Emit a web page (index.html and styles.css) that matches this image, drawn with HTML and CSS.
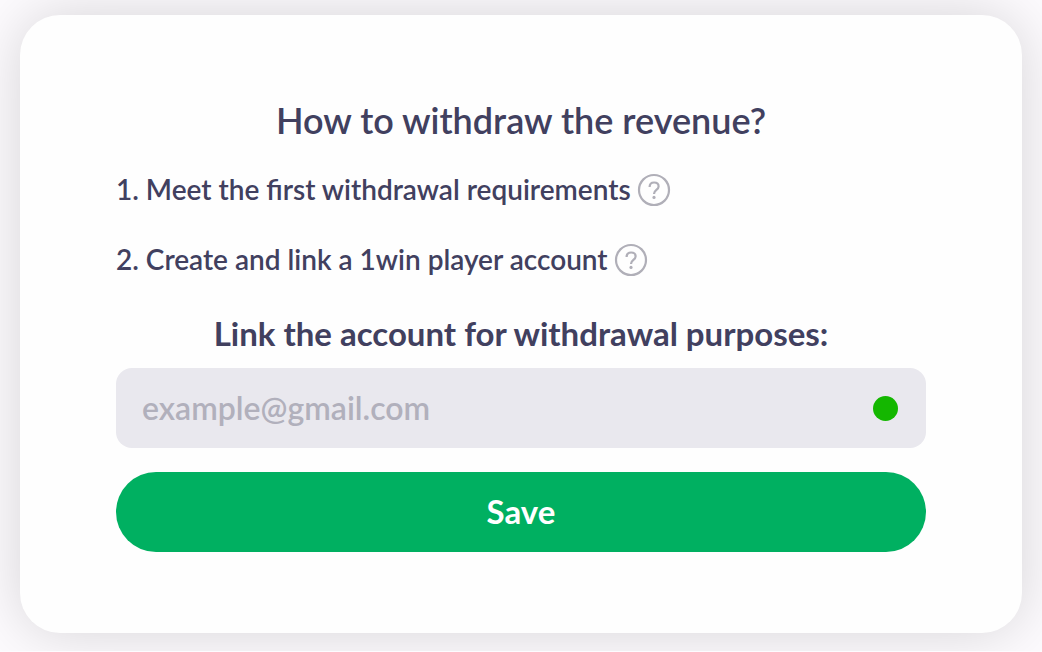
FILE: index.html
```html
<!DOCTYPE html>
<html lang="en">
<head>
<meta charset="utf-8">
<meta name="viewport" content="width=device-width, initial-scale=1">
<title>Withdraw revenue</title>
<link rel="stylesheet" href="styles.css">
</head>
<body>
<main class="card">
  <h1 class="title">How to withdraw the revenue?</h1>
  <ol class="steps">
    <li class="step"><span>1. Meet the first withdrawal requirements</span>
      <button class="help" type="button" aria-label="About withdrawal requirements"><svg class="help-icon" viewBox="0 0 34 34" aria-hidden="true"><circle cx="17" cy="17" r="15"/><path d="M12.6 14c0-2.8 1.8-4.5 4.5-4.5s4.5 1.6 4.5 3.9c0 3.4-4.5 3.6-4.5 7.2v.4"/><circle class="dot" cx="17" cy="24.4" r="1.6"/></svg></button>
    </li>
    <li class="step"><span>2. Create and link a 1win player account</span>
      <button class="help" type="button" aria-label="About the player account"><svg class="help-icon" viewBox="0 0 34 34" aria-hidden="true"><circle cx="17" cy="17" r="15"/><path d="M12.6 14c0-2.8 1.8-4.5 4.5-4.5s4.5 1.6 4.5 3.9c0 3.4-4.5 3.6-4.5 7.2v.4"/><circle class="dot" cx="17" cy="24.4" r="1.6"/></svg></button>
    </li>
  </ol>
  <form class="form">
    <label class="label" for="email">Link the account for withdrawal purposes:</label>
    <div class="field">
      <input class="input" id="email" type="email" placeholder="example@gmail.com">
      <span class="status"></span>
    </div>
    <button class="save" type="button">Save</button>
  </form>
</main>
</body>
</html>
```
FILE: styles.css
```css
* {
  box-sizing: border-box;
}

body {
  margin: 0;
  padding: 15px 20px 18px;
  background: #fdfbfe;
  color: #41405f;
  font-family: Lato, "Open Sans", sans-serif;
}

.card {
  padding: 80px 96px 81px;
  border-radius: 40px;
  background: #fefefe;
  box-shadow: 0 0 60px rgba(0, 0, 0, 0.16);
}

.title {
  margin: 0 0 28px;
  font-size: 36px;
  font-weight: 600;
  line-height: 50px;
  text-align: center;
}

.steps {
  display: flex;
  flex-direction: column;
  gap: 36px;
  margin: 0;
  padding: 0;
  list-style: none;
}

.step {
  display: flex;
  align-items: center;
  gap: 6px;
  font-size: 28px;
  font-weight: 600;
  line-height: 34px;
}

.step span {
  padding-bottom: 2px;
  line-height: 32px;
}

.help {
  display: flex;
  padding: 0;
  border: 0;
  background: none;
}

.help-icon {
  width: 34px;
  height: 34px;
  fill: none;
  stroke: #b0afb8;
  stroke-width: 2.2;
}

.help-icon .dot {
  fill: #b0afb8;
  stroke: none;
}

.form {
  display: flex;
  flex-direction: column;
  margin-top: 36px;
}

.label {
  margin-bottom: 15px;
  font-size: 33px;
  font-weight: 700;
  line-height: 40px;
  text-align: center;
}

.field {
  display: flex;
  align-items: center;
  height: 80px;
  padding: 0 28px 0 26px;
  border-radius: 16px;
  background: #e9e8ee;
}

.input {
  flex: 1;
  min-width: 0;
  padding: 0;
  border: 0;
  outline: 0;
  background: none;
  color: inherit;
  font: 600 32px/40px Lato, "Open Sans", sans-serif;
}

.input::placeholder {
  color: #b1b0bc;
  opacity: 1;
}

.status {
  width: 25px;
  height: 25px;
  border-radius: 50%;
  background: #14b700;
}

.save {
  height: 80px;
  margin-top: 24px;
  padding: 0 0 2px;
  border: 0;
  border-radius: 40px;
  background: #00b061;
  color: #fff;
  font: 700 33px/40px Lato, "Open Sans", sans-serif;
}
```
